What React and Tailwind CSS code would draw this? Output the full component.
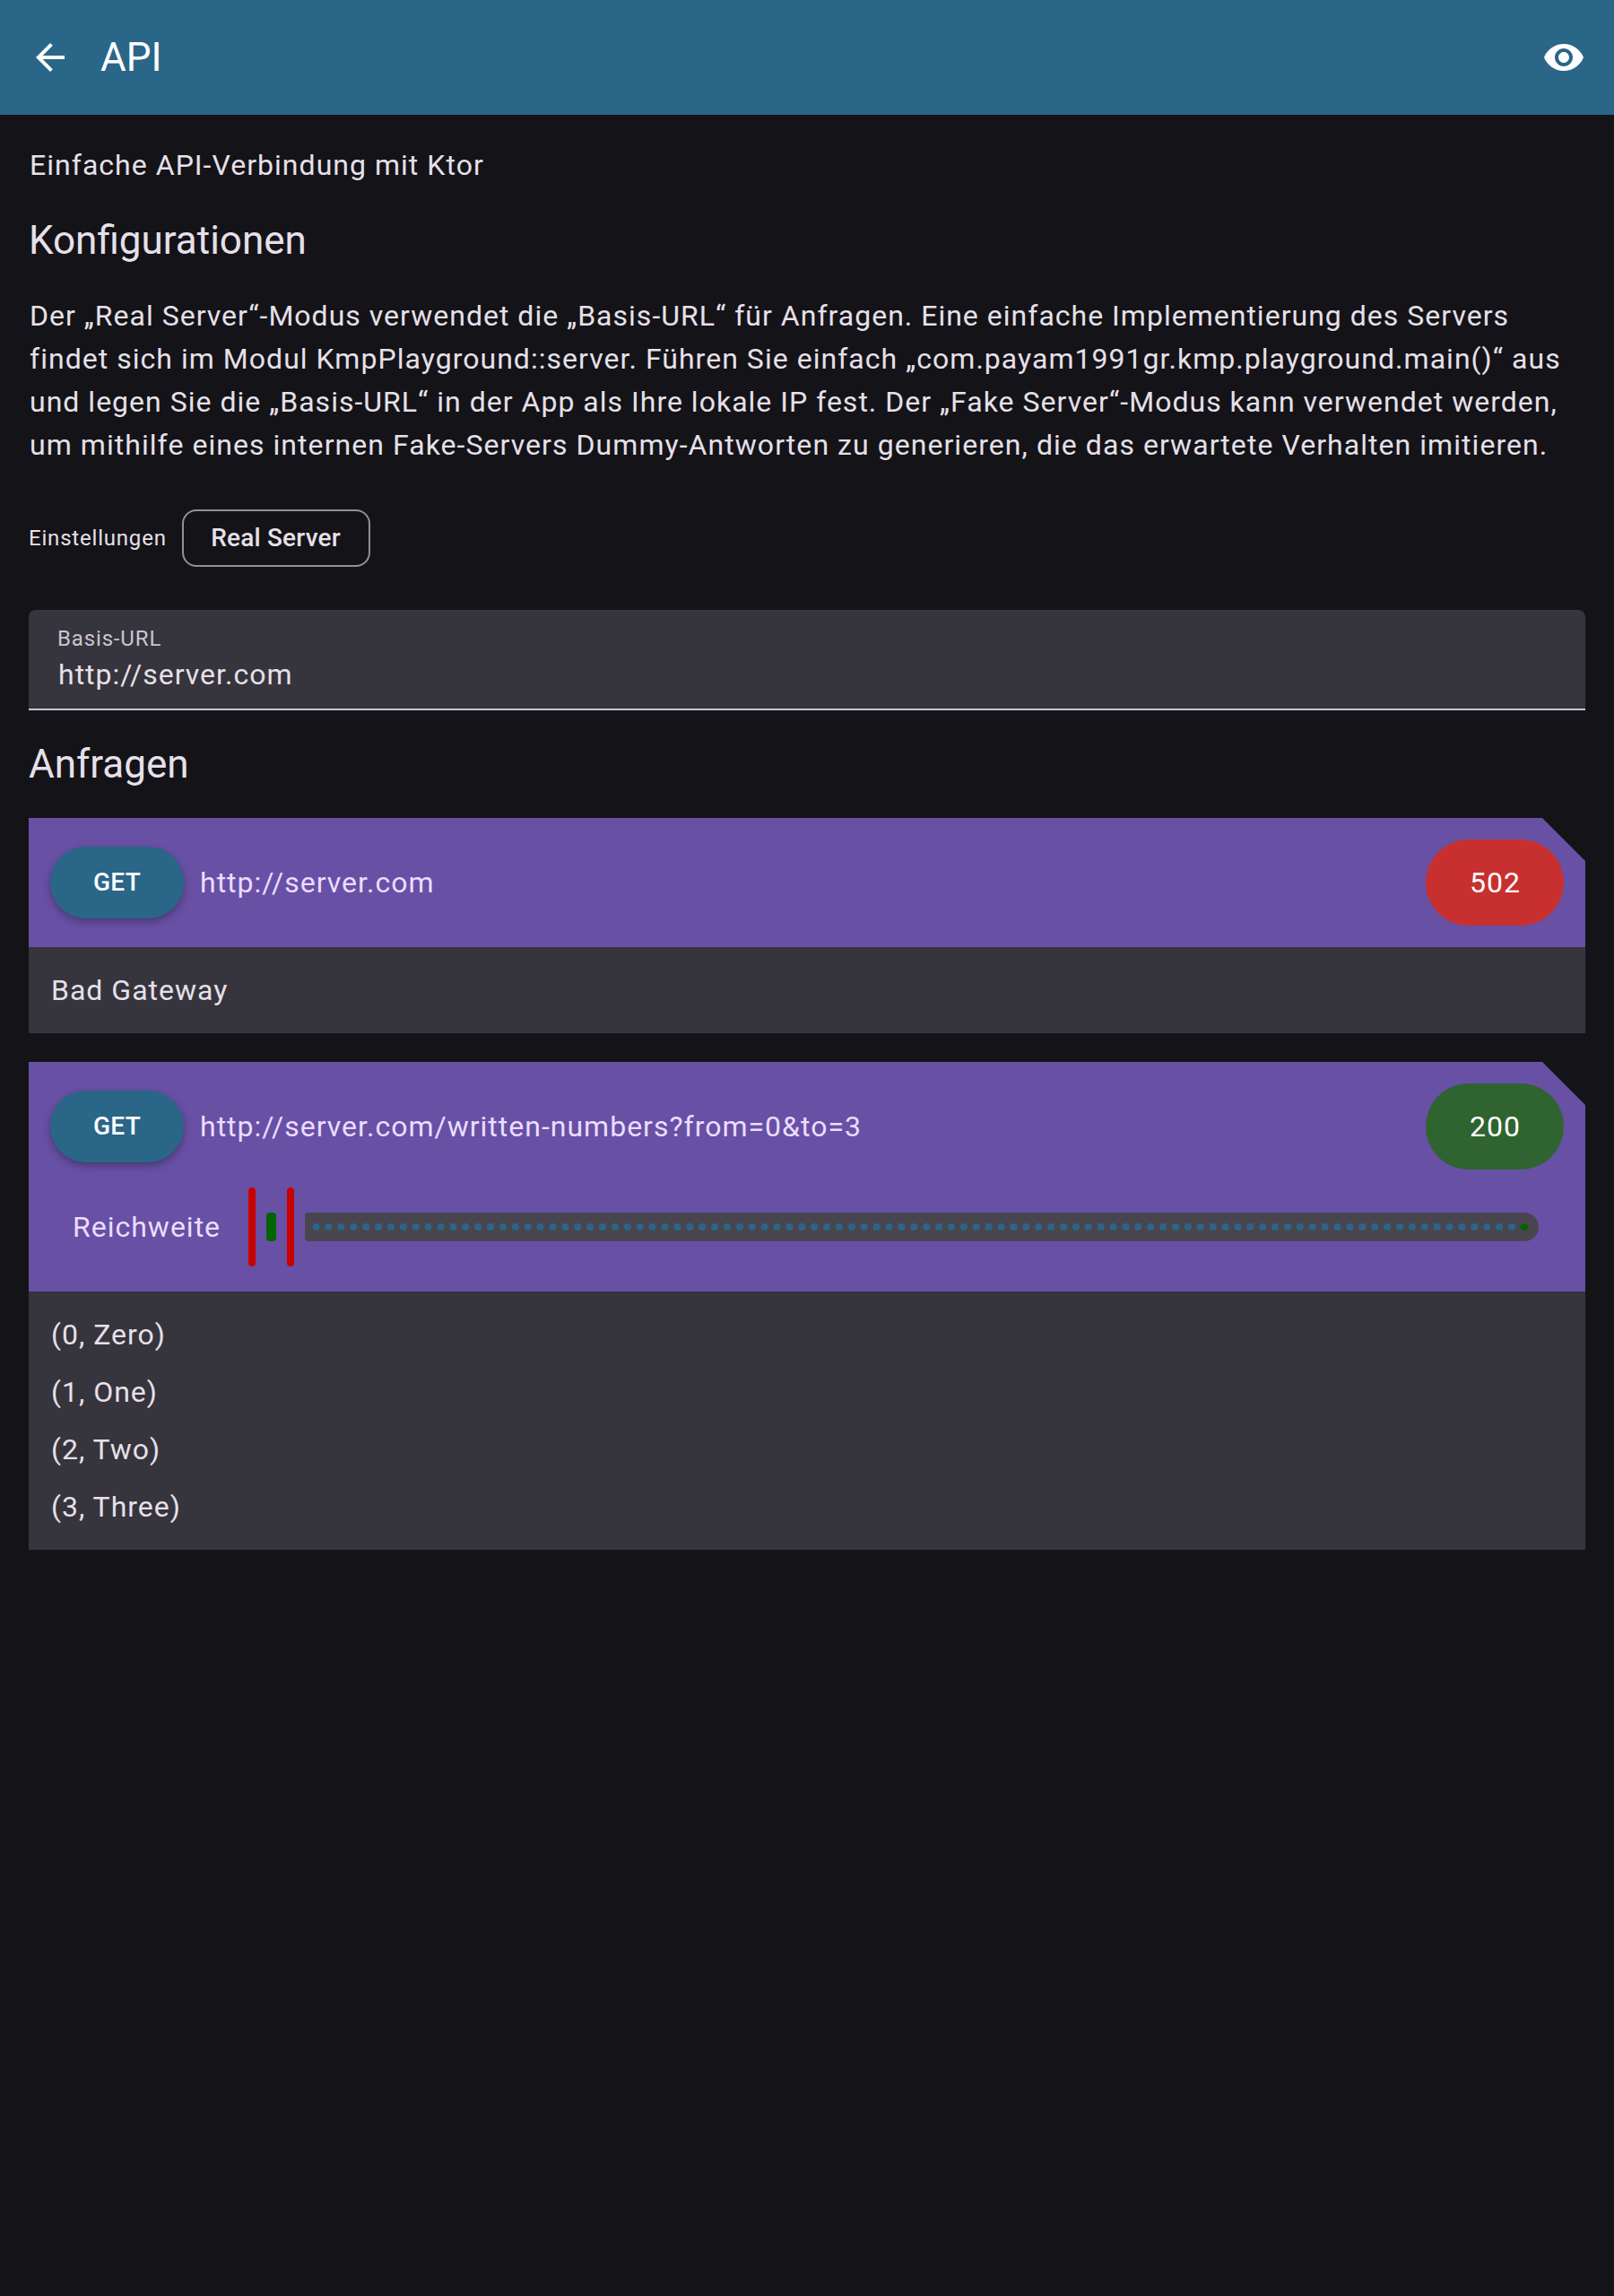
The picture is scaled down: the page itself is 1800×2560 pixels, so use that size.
import React from "react";

const TICK_START = 12.6;
const TICK_STEP = 13.89;
const TICK_COUNT = 97;

function ArrowBackIcon() {
  return (
    <svg viewBox="0 0 24 24" className="size-12 fill-white">
      <path d="M20 11H7.83l5.59-5.59L12 4l-8 8 8 8 1.41-1.41L7.83 13H20v-2z" />
    </svg>
  );
}

function VisibilityIcon() {
  return (
    <svg viewBox="0 0 24 24" className="size-12 fill-white">
      <path d="M12 4.5C7 4.5 2.73 7.61 1 12c1.73 4.39 6 7.5 11 7.5s9.27-3.11 11-7.5c-1.73-4.39-6-7.5-11-7.5zM12 17c-2.76 0-5-2.24-5-5s2.24-5 5-5 5 2.24 5 5-2.24 5-5 5zm0-8c-1.66 0-3 1.34-3 3s1.34 3 3 3 3-1.34 3-3-1.34-3-3-3z" />
    </svg>
  );
}

function RangeSlider() {
  return (
    <div className="flex h-[88px] items-center">
      <div className="h-[88px] w-2 rounded-full bg-[#c80000]" />
      <div className="ml-3 h-8 w-[11px] rounded-[4px] bg-[#006400]" />
      <div className="ml-3 h-[88px] w-2 rounded-full bg-[#c80000]" />
      <svg className="ml-3 h-8 w-[1376px]" viewBox="0 0 1376 32">
        <path
          d="M4 0H1360A16 16 0 0 1 1360 32H4A4 4 0 0 1 0 28V4A4 4 0 0 1 4 0Z"
          fill="#49454f"
        />
        {Array.from({ length: TICK_COUNT }, (_, i) => (
          <circle key={i} cx={TICK_START + i * TICK_STEP} cy="16" r="4" fill="#2a6688" />
        ))}
        <circle cx="1360" cy="16" r="4" fill="#006400" />
      </svg>
    </div>
  );
}

function RequestCard({ url, status, statusClass, slider, lines }) {
  return (
    <section className="mb-8">
      <div className="bg-[#6850a5] text-[#eaddff] [clip-path:polygon(0_0,calc(100%_-_48px)_0,100%_48px,100%_100%,0_100%)]">
        <div className="flex h-36 items-center px-6">
          <button className="flex h-20 w-[149px] items-center justify-center rounded-full bg-[#2a6688] text-[28px] font-medium tracking-[0.2px] text-white shadow-[0_4px_10px_rgba(0,0,0,0.3)]">
            GET
          </button>
          <span className="ml-[18px] flex-1">{url}</span>
          <span
            className={
              "flex h-24 w-[154px] items-center justify-center rounded-full pl-px text-white " + statusClass
            }
          >
            {status}
          </span>
        </div>
        {slider && (
          <div className="-mt-1 flex h-[116px] items-center pb-7 pl-[49px]">
            <span className="w-[196px]">Reichweite</span>
            <RangeSlider />
          </div>
        )}
      </div>
      <div className="flex flex-col gap-4 bg-[#36343c] py-6 pl-[25px] text-[#e6e0e9]">
        {lines.map((line) => (
          <p key={line}>{line}</p>
        ))}
      </div>
    </section>
  );
}

export default function App() {
  return (
    <div className="min-h-[2560px] w-[1800px] bg-[#141318] font-[Roboto,sans-serif] text-[32px] leading-[48px] tracking-[1px] text-[#e6e0e9]">
      <header className="flex h-32 items-center bg-[#2a6688] px-8 text-white">
        <ArrowBackIcon />
        <h1 className="ml-8 flex-1 text-[44px] leading-[56px] tracking-normal">API</h1>
        <VisibilityIcon />
      </header>
      <main className="px-8 pt-8">
        <p className="pl-px tracking-[1.03px]">Einfache API-Verbindung mit Ktor</p>
        <h2 className="mt-8 text-[44px] leading-[56px] tracking-normal">Konfigurationen</h2>
        <p className="mt-8 pl-px whitespace-nowrap">
          <span className="block tracking-[1.01px]">
            Der „Real Server“-Modus verwendet die „Basis-URL“ für Anfragen. Eine einfache Implementierung des Servers
          </span>
          <span className="block tracking-[1.03px]">
            findet sich im Modul KmpPlayground::server. Führen Sie einfach „com.payam1991gr.kmp.playground.main()“ aus
          </span>
          <span className="block tracking-[1.01px]">
            und legen Sie die „Basis-URL“ in der App als Ihre lokale IP fest. Der „Fake Server“-Modus kann verwendet werden,
          </span>
          <span className="block tracking-[1.05px]">
            um mithilfe eines internen Fake-Servers Dummy-Antworten zu generieren, die das erwartete Verhalten imitieren.
          </span>
        </p>
        <div className="mt-12 flex h-16 items-center">
          <span className="w-[171px] text-[24px] leading-8 tracking-[0.8px]">Einstellungen</span>
          <button className="flex h-16 w-[210px] items-center justify-center rounded-[16px] border-2 border-[#938f99] pr-px text-[28px] font-medium tracking-[0.2px]">
            Real Server
          </button>
        </div>
        <div className="mt-12 h-28 rounded-t-[8px] border-b-2 border-[#cac4d0] bg-[#36343c] px-8 pt-4">
          <div className="text-[24px] leading-8 tracking-[0.85px] text-[#cac4d0]">Basis-URL</div>
          <div className="pl-px">http://server.com</div>
        </div>
        <h2 className="mt-8 mb-8 text-[44px] leading-[56px] tracking-normal">Anfragen</h2>
        <RequestCard
          url="http://server.com"
          status="502"
          statusClass="bg-[#c8302f]"
          lines={["Bad Gateway"]}
        />
        <RequestCard
          url="http://server.com/written-numbers?from=0&to=3"
          status="200"
          statusClass="bg-[#2f6430]"
          slider
          lines={["(0, Zero)", "(1, One)", "(2, Two)", "(3, Three)"]}
        />
      </main>
    </div>
  );
}
